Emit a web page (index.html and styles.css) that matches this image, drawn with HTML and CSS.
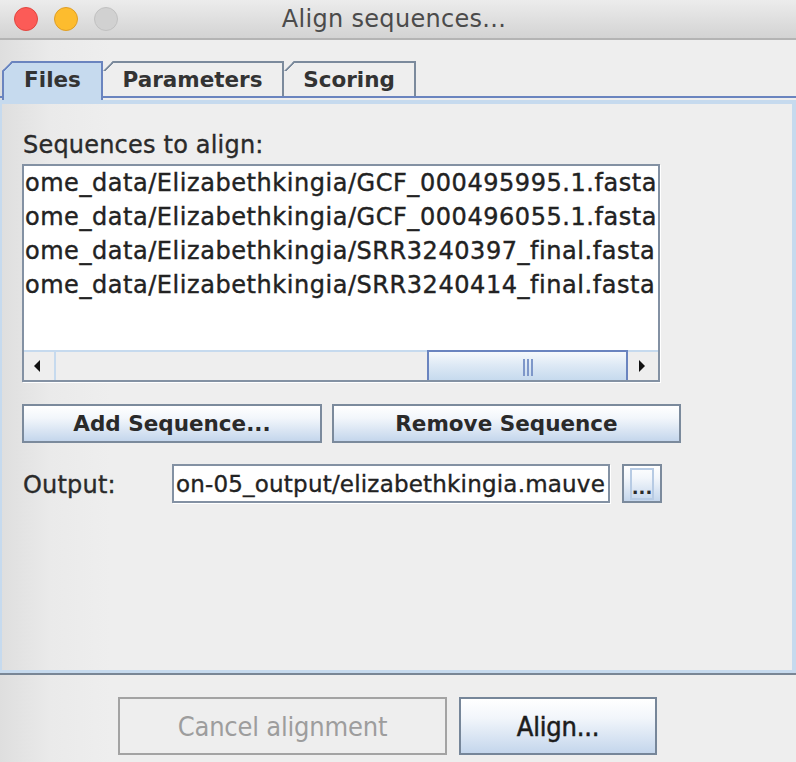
FILE: index.html
```html
<!DOCTYPE html>
<html lang="en">
<head>
<meta charset="utf-8">
<title>Align sequences...</title>
<link rel="stylesheet" href="styles.css">
</head>
<body>
<div class="window">
  <header class="titlebar">
    <div class="lights">
      <span class="light red"></span>
      <span class="light yellow"></span>
      <span class="light gray"></span>
    </div>
    <div class="title">Align sequences...</div>
    <div></div>
  </header>
  <div class="main">
    <div class="tabs">
      <div class="tab selected">Files</div>
      <div class="tab param">Parameters</div>
      <div class="tab scoring">Scoring</div>
    </div>
    <section class="panel">
      <div class="label">Sequences to align:</div>
      <div class="listbox">
        <div class="listview">
          <div class="rows">
            <div class="row">ome_data/Elizabethkingia/GCF_000495995.1.fasta</div>
            <div class="row">ome_data/Elizabethkingia/GCF_000496055.1.fasta</div>
            <div class="row">ome_data/Elizabethkingia/SRR3240397_final.fasta</div>
            <div class="row">ome_data/Elizabethkingia/SRR3240414_final.fasta</div>
          </div>
        </div>
        <div class="hscroll">
          <div class="sbtn left"><span class="tri-left"></span></div>
          <div class="track">
            <div class="thumb"><span class="grip"></span><span class="grip"></span><span class="grip"></span></div>
          </div>
          <div class="sbtn right"><span class="tri-right"></span></div>
        </div>
      </div>
      <div class="btnrow">
        <button class="btn add">Add Sequence...</button>
        <button class="btn remove">Remove Sequence</button>
      </div>
      <div class="outrow">
        <div class="outlabel">Output:</div>
        <div class="field"><span class="fieldtext">on-05_output/elizabethkingia.mauve</span></div>
        <button class="browse"><span class="browse-inner">...</span></button>
      </div>
    </section>
    <div class="sep"></div>
    <footer class="footer">
      <button class="fbtn cancel" disabled>Cancel alignment</button>
      <button class="fbtn align">Align...</button>
    </footer>
  </div>
</div>
</body>
</html>
```

FILE: styles.css
```css
* { box-sizing: border-box; }
html, body { margin: 0; padding: 0; }
body {
  width: 796px;
  height: 762px;
  overflow: hidden;
  background: #eeeeee;
  font-family: "DejaVu Sans", "Noto Sans", sans-serif;
  color: #2a2a2a;
}
.window { display: flex; flex-direction: column; height: 762px; }

/* title bar */
.titlebar {
  height: 40px;
  flex: none;
  display: grid;
  grid-template-columns: 1fr auto 1fr;
  align-items: center;
  background: linear-gradient(#ececec, #d3d3d3);
  border-bottom: 2px solid #b4b4b4;
}
.lights { display: flex; gap: 16px; padding-left: 14px; }
.light { width: 24px; height: 24px; border-radius: 50%; }
.light.red { background: #fc5b57; border: 1px solid #e2463f; }
.light.yellow { background: #fdbc2e; border: 1px solid #df9e26; }
.light.gray { background: #d1d1d1; border: 1px solid #c1c1c1; }
.title { font-size: 24px; color: #4b4b4b; letter-spacing: 0.3px; margin-left: -8px; }

/* main */
.main {
  flex: 1;
  display: flex;
  flex-direction: column;
  background: linear-gradient(to right, #dedede 0px, #eaeaea 50px, #eeeeee 110px);
}

/* tabs */
.tabs {
  display: flex;
  padding: 21px 0 0 2px;
  border-bottom: 2px solid #6a84bf;
  margin-bottom: 2px;
  height: 58px;
  flex: none;
}
.tab {
  position: relative;
  height: 35px;
  border-top: 2px solid #7b8a9c;
  border-right: 2px solid #7b8a9c;
  font-weight: bold;
  font-size: 21.5px;
  color: #333;
  display: flex;
  align-items: center;
  justify-content: center;
  padding-bottom: 1px;
  clip-path: polygon(0 10px, 10px 0, 100% 0, 100% 100%, 0 100%);
  --bc: #7b8a9c;
}
.tab::before {
  content: "";
  position: absolute;
  left: 0;
  top: -2px;
  width: 10px;
  height: 10px;
  background: linear-gradient(to bottom right, transparent calc(50% - 0.5px), var(--bc) calc(50% - 0.5px), var(--bc) calc(50% + 1.6px), transparent calc(50% + 1.6px));
}
.tab.selected {
  width: 101px;
  height: 39px;
  margin-bottom: -4px;
  border-left: 2px solid #6a84bf;
  border-top-color: #6a84bf;
  border-right-color: #6a84bf;
  background: #c6daee;
  padding-bottom: 5px;
  --bc: #6a84bf;
  z-index: 1;
}
.tab.selected::before { left: -2px; }
.tab.param { width: 181px; }
.tab.scoring { width: 132px; }

/* panel */
.panel {
  flex: 1;
  border-style: solid;
  border-color: #c6daee;
  border-width: 4px 4px 3px 2px;
  padding: 26px 0 0 20px;
  display: flex;
  flex-direction: column;
}
.label {
  font-size: 24px;
  line-height: 30px;
  letter-spacing: 0.2px;
  -webkit-text-stroke: 0.35px #2a2a2a;
  margin-left: 1px;
}
.listbox {
  margin-top: 4px;
  width: 638px;
  height: 218px;
  border: 2px solid #8391a3;
  box-shadow: 1px 1px 0 #ffffff;
  background: #ffffff;
  display: flex;
  flex-direction: column;
}
.listview {
  flex: 1;
  overflow: hidden;
  display: flex;
  justify-content: flex-end;
}
.rows { flex: none; width: max-content; }
.row {
  height: 34px;
  line-height: 34px;
  font-size: 24px;
  letter-spacing: 0.55px;
  white-space: nowrap;
  color: #222;
  -webkit-text-stroke: 0.4px #222;
  padding-right: 1px;
}
.hscroll {
  height: 30px;
  flex: none;
  display: flex;
  background: #eeeeee;
  border-top: 2px solid #c6daee;
}
.sbtn {
  width: 32px;
  display: flex;
  align-items: center;
  justify-content: center;
  background: #eeeeee;
}
.sbtn.left { border-right: 2px solid #c6daee; }
.sbtn.right { width: 30px; background: #eeeeee; }
.tri-left {
  width: 0; height: 0;
  border-top: 6px solid transparent;
  border-bottom: 6px solid transparent;
  border-right: 6px solid #111;
  margin-left: -4px;
}
.tri-right {
  width: 0; height: 0;
  border-top: 6px solid transparent;
  border-bottom: 6px solid transparent;
  border-left: 6px solid #111;
  margin-left: -2px;
}
.track { flex: 1; display: flex; justify-content: flex-end; }
.thumb {
  width: 201px;
  margin-top: -2px;
  border: 2px solid #6a84bf;
  border-bottom-width: 0;
  background: linear-gradient(#f6f9fc, #dce8f5 50%, #c6daee);
  display: flex;
  justify-content: center;
  align-items: center;
  gap: 2px;
  padding-top: 2px;
}
.grip { width: 2px; height: 17px; background: #7e97c9; }

/* buttons */
.btnrow { display: flex; gap: 10px; margin-top: 22px; }
.btn, .browse, .fbtn {
  font-family: "DejaVu Sans", sans-serif;
  border: 2px solid #7b8a9c;
  background: linear-gradient(#ffffff 0%, #f2f6fb 35%, #c4d6ec 100%);
  color: #2a2a2a;
  padding: 0;
  margin: 0;
}
.btn {
  height: 39px;
  font-size: 21.5px;
  font-weight: bold;
  padding-bottom: 1px;
}
.btn.add { width: 300px; }
.btn.remove { width: 349px; }

.outrow { display: flex; align-items: center; margin-top: 21px; }
.outlabel {
  width: 150px;
  font-size: 24px;
  letter-spacing: 0.2px;
  -webkit-text-stroke: 0.35px #2a2a2a;
  padding-left: 1px;
  padding-top: 3px;
}
.field {
  width: 438px;
  height: 39px;
  border: 2px solid #8391a3;
  box-shadow: 1px 1px 0 #ffffff;
  background: #ffffff;
  overflow: hidden;
  display: flex;
  justify-content: flex-end;
  align-items: center;
  padding-right: 3px;
}
.fieldtext {
  flex: none;
  font-size: 23px;
  letter-spacing: 0.2px;
  white-space: nowrap;
  color: #222;
  -webkit-text-stroke: 0.35px #222;
}
.browse {
  margin-left: 12px;
  width: 40px;
  height: 39px;
  display: flex;
  justify-content: center;
  padding: 2px 7px 1px;
}
.browse-inner {
  flex: 1;
  border: 2px solid #b7cbe4;
  font-size: 18px;
  font-weight: bold;
  line-height: 1;
  display: flex;
  justify-content: center;
  align-items: flex-end;
  padding-bottom: 1px;
  color: #2a2a2a;
}

/* footer */
.sep { height: 2px; background: #798695; flex: none; }
.footer {
  height: 87px;
  flex: none;
  display: flex;
  gap: 12px;
  padding: 22px 0 0 118px;
  align-items: flex-start;
}
.fbtn {
  height: 58px;
  font-family: "DejaVu Sans Condensed", "DejaVu Sans", sans-serif;
  font-stretch: condensed;
  font-size: 27px;
  letter-spacing: -0.2px;
}
.fbtn.cancel {
  width: 329px;
  background: #eeeeee;
  border-color: #a3a3a3;
  color: #9d9d9d;
}
.fbtn.align {
  width: 198px;
  color: #1c1c1c;
  -webkit-text-stroke: 0.5px #1c1c1c;
  border-color: #768699;
}
```
